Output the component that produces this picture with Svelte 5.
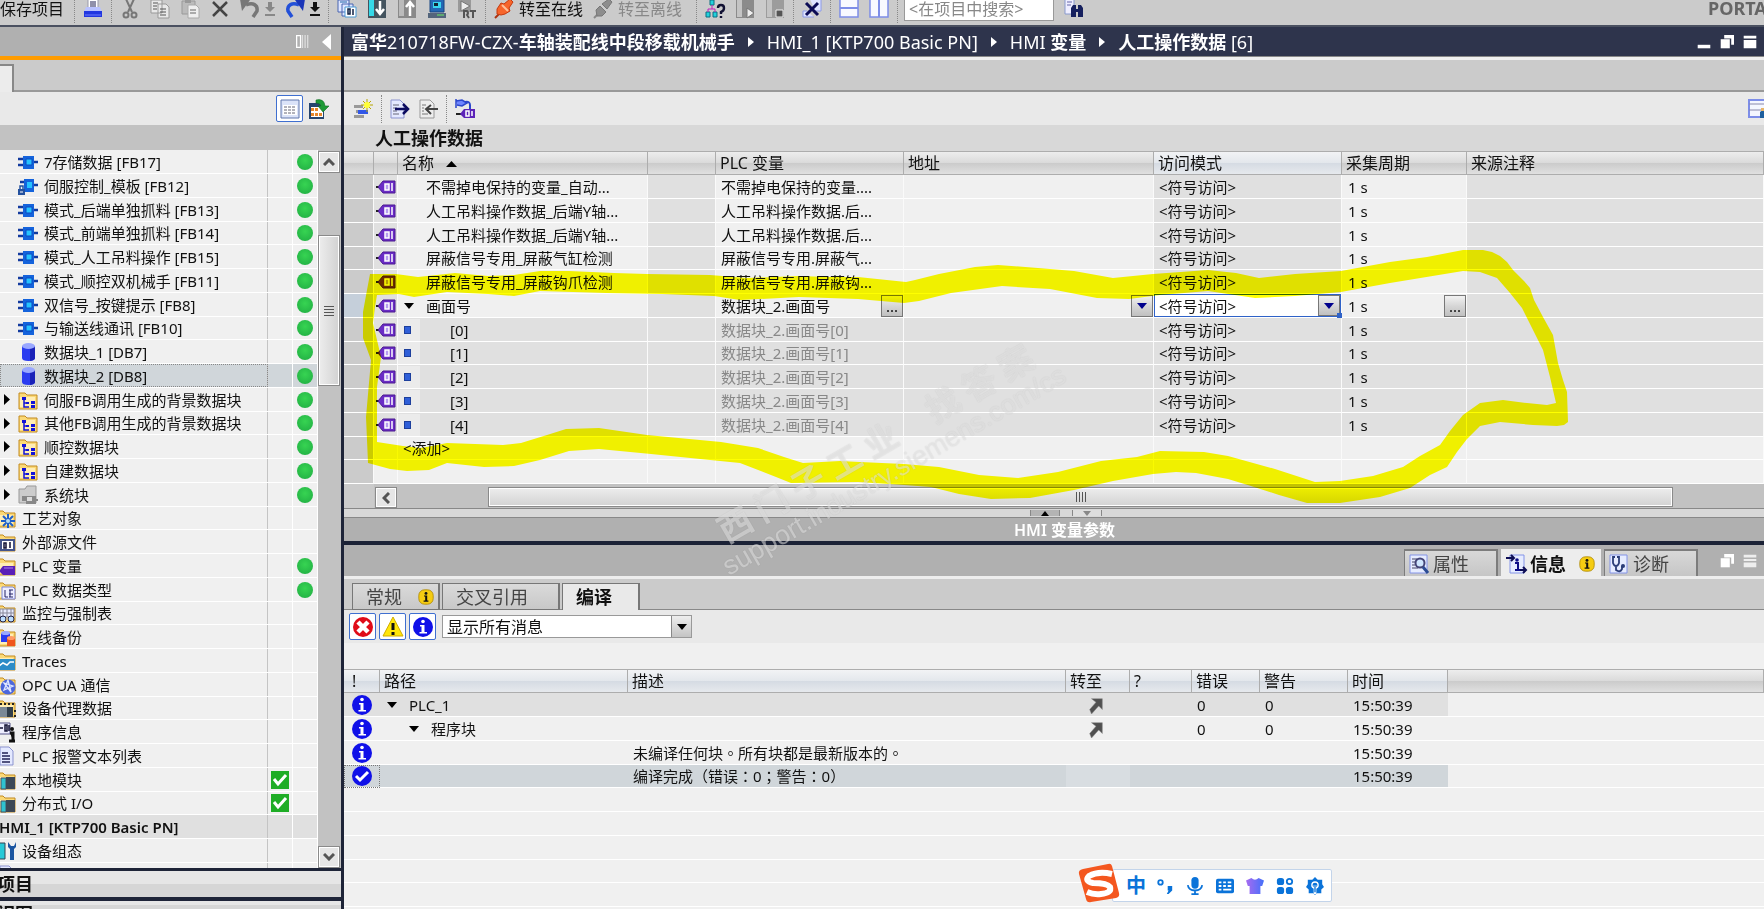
<script>
  // inner markup of the 20x20 icons
  const page = '<path d="M4 1h9l4 4v14H4z" fill="#e4e9ff" stroke="#8b93cf"/>';
  const folder = '<path d="M1 3h6l2 2h10v14H1z" fill="#fbd977" stroke="#c28a1e"/><path d="M2 7h15v10H2z" fill="#ffedb5"/>';
  const icons = {
    print: '<path d="M5 0h10v9H5z" fill="#fff" stroke="#99a"/><path d="M7 3h6M7 5h6M7 7h6" stroke="#225"/><path d="M3 8h14l2 5H1z" fill="#b9c2ff"/><path d="M1 12h18v6H1z" fill="#2237e0"/><path d="M2 16h16" stroke="#6d7cff"/>',
    cut: '<path d="M6 0l6 13M14 0L8 13" stroke="#777" stroke-width="2" fill="none"/><circle cx="6" cy="16" r="2.5" fill="none" stroke="#777" stroke-width="2"/><circle cx="14" cy="16" r="2.5" fill="none" stroke="#777" stroke-width="2"/>',
    copy: '<path d="M1 1h11v13H1zM8 5h8l3 3v11H8z" fill="#e8e8e8" stroke="#999"/><path d="M3 4h5M3 7h4M3 10h4M10 10h6M10 13h6M10 16h6" stroke="#555"/>',
    paste: '<path d="M2 2h13v13H2z" fill="#bbb" stroke="#999"/><path d="M5 0h6v4H5z" fill="#999"/><path d="M8 6h8l3 3v10H8z" fill="#eee" stroke="#aaa"/><path d="M10 11h6M10 14h6" stroke="#666"/>',
    remove: '<path d="M3 3l14 14M17 3L3 17" stroke="#444" stroke-width="2.5"/>',
    undo: '<path d="M6 6c7-3 12 0 11 6l-4 6" fill="none" stroke="#777" stroke-width="3.5"/><path d="M0 0l10 1-8 11z" fill="#777"/>',
    redo: '<path d="M14 6C7 3 2 6 3 12l4 6" fill="none" stroke="#2350d8" stroke-width="3.5"/><path d="M20 0L10 1l8 11z" fill="#1a35b8"/>',
    compile: '<path d="M1 1h11v12H1zM5 5h11v12H5z" fill="#dfe6ff" stroke="#4865b0"/><path d="M3 3h7" stroke="#26a"/><path d="M8 8h11v10H8z" fill="#fff" stroke="#4a9ad4"/><path d="M11 10h2v5h-2zM16 10v6" stroke="#124" fill="none" stroke-width="1.5"/>',
    download: '<path d="M1 0h18v19H1z" fill="#44545f"/><path d="M2 1h5v16H2z" fill="#35d9e8"/><path d="M13 2v12M9 10l4 5 4-5" stroke="#fff" stroke-width="2.5" fill="none"/>',
    upload: '<path d="M1 0h18v19H1z" fill="#8a8a8a"/><path d="M2 1h5v16H2z" fill="#bbb"/><path d="M13 17V4M9 8l4-5 4 5" stroke="#fff" stroke-width="2.5" fill="none"/>',
    simulate: '<path d="M3 0h14v13H3z" fill="#2467b4" stroke="#174480"/><path d="M6 3h8v6H6z" fill="#39d5ee"/><path d="M7 4h4v3H7z" fill="#123"/><path d="M1 14h18v5H1z" fill="#54657c"/><path d="M10 16h7" stroke="#6e6"/>',
    runtime: '<path d="M1 0h13v13H1z" fill="#999"/><path d="M4 2l9 5-9 5z" fill="#eee" stroke="#777"/><path d="M7 19v-7h3q2 2 0 4l2 3M13 12h6M16 12v7" stroke="#555" stroke-width="2" fill="none"/>',
    online: '<path d="M1 19l5-5" stroke="#a31" stroke-width="2"/><path d="M3 10l4-6 3 1 6-5 3 3-4 6 1 3-5 3-4 1-4-1z" fill="#f7652b" stroke="#c43a10"/><path d="M8 6l6 6" stroke="#ffc09a" stroke-width="2"/>',
    offline: '<path d="M1 19l5-5" stroke="#888" stroke-width="2"/><path d="M3 11l4-4 6 6-4 4-5 0zM9 5l7-5 3 3-5 7z" fill="#8d8d8d" stroke="#777"/>',
    diagnose: '<path d="M5 1h4v5H5zM1 13h4v5H1zM8 13h4v5H8z" fill="#21d2dd" stroke="#0c6c80"/><path d="M7 6v4M3 13v-3h7v3" stroke="#b2b" fill="none"/><path d="M13 9q0-3 3-3t3 3-3 4v2M16 17v2" stroke="#113" stroke-width="2.4" fill="none"/>',
    startCpu: '<path d="M1 0h18v19H1z" fill="#8b8b8b"/><path d="M2 1h5v17H2z" fill="#c4c4c4"/><path d="M12 9l7 5-7 5z" fill="#eee" stroke="#777"/>',
    stopCpu: '<path d="M1 0h18v19H1z" fill="#9c9c9c"/><path d="M2 1h5v17H2z" fill="#c4c4c4"/><path d="M11 11h7v7h-7z" fill="#555" stroke="#eee"/>',
    crossRef: '<path d="M8 0h11v12h-6M12 18H1v-6h4" fill="#dfe4ff" stroke="#8d9be8"/><path d="M4 4l12 12M16 4L4 16" stroke="#0b0b55" stroke-width="3"/>',
    splitH: '<path d="M1 0h18v18H1z" fill="#f8f9ff" stroke="#7d8de8" stroke-width="1.5"/><path d="M1 9h18" stroke="#7d8de8" stroke-width="2"/>',
    splitV: '<path d="M1 0h18v18H1z" fill="#f8f9ff" stroke="#7d8de8" stroke-width="1.5"/><path d="M10 0v18" stroke="#7d8de8" stroke-width="2"/>',
    find: '<path d="M1 0h9v15H1z" fill="#eef" stroke="#89c"/><path d="M3 3h5M3 6h4" stroke="#66a"/><path d="M7 18V9l2-3h3v4h2V6h3l2 3v9h-5v-5h-2v5z" fill="#16205e"/>',
    list: '<path d="M1 1h18v18H1z" fill="#dbe3f8" stroke="#6076ac"/><path d="M3 6h14v10H3z" fill="#fff"/><path d="M4 8h3M8 8h3M12 8h3M4 11h3M8 11h3M12 11h3M4 14h3M8 14h3M12 14h3" stroke="#667"/>',
    exportList: '<path d="M0 4h15v16H0z" fill="#26456e"/><path d="M2 8h12v10H2z" fill="#fff"/><path d="M2 9h3v3H2zM6 9h3v3H6zM2 14h3v3H2zM6 14h3v3H6zM10 14h3v3h-3z" fill="#e7862a"/><path d="M7 1q8-2 9 6h4l-6 6-5-6h3q-1-3-5-3z" fill="#1d9a35" stroke="#0e6c20" stroke-width=".6"/>',
    addTag: '<path d="M1 6h9v3H1zM3 11h8v3H3zM1 16h10v3H1z" fill="#999"/><path d="M5 11h10v4H5z" fill="#3156e8"/><path d="M14 0v13M8 6h12M10 2l8 8M18 2l-8 8" stroke="#b7a600"/><circle cx="14" cy="6" r="3" fill="#ff3"/>',
    exportDoc: '<path d="M1 1h9l4 4v14H1z" fill="#e4e9ff" stroke="#8b93cf"/><path d="M3 6h6M3 9h4M3 12h4M3 15h6" stroke="#667"/><path d="M5 10h13M13 5l5 5-5 5" stroke="#0b0b60" stroke-width="2.5" fill="none"/>',
    importDoc: '<path d="M2 1h10l4 4v14H2z" fill="#eee" stroke="#999"/><path d="M4 6h4M4 9h2M4 12h2M4 15h6" stroke="#777"/><path d="M20 10H9M13 6l-5 4 5 5" stroke="#444" stroke-width="2" fill="none"/>',
    linkTag: '<path d="M1 0v9M1 2l6-1 5 3-5 3-5-1" stroke="#2b46cc" stroke-width="1.5" fill="#6f86ff"/><path d="M10 3q5-1 5 3v4" stroke="#2b46cc" stroke-width="2" fill="none"/><path d="M1 15h5" stroke="#222" stroke-width="2"/><path d="M5 15l4-5h11v9H9z" fill="#5c23b8"/><path d="M11 12h3v5h-3zM17 12v5" stroke="#fff" fill="none" stroke-width="1.5"/>',
    viewSet: '<path d="M1 1h24v17H1z" fill="#f4f6ff" stroke="#7d8de8" stroke-width="2"/><path d="M1 5h24M1 11h24" stroke="#88a"/><path d="M12 19v-6l4-3h6v9z" fill="#1e5f9e"/><path d="M13 9h7v3h-7z" fill="#e7b469"/>',
    block: '<path d="M0 7h6M0 13h6M14 10h6" stroke="#123a9e" stroke-width="2.5"/><path d="M5 4h11v13H5z" fill="#1463dc"/><path d="M8 7h6v6H8z" fill="#27c2ff" stroke="#0a4ac0"/>',
    blockLock: '<path d="M2 6h6M14 9h6" stroke="#123a9e" stroke-width="2.5"/><path d="M6 3h10v13H6z" fill="#1463dc"/><path d="M9 6h5v6H9z" fill="#27c2ff"/><path d="M0 13h7v6H0z" fill="#24519e"/><path d="M2 13v-3h3v3" stroke="#24519e" fill="none" stroke-width="1.5"/><path d="M2 16h3" stroke="#fff"/>',
    db: '<path d="M4 4v12q0 3 6.500 3t6.500-3V4z" fill="#2b3cf0"/><path d="M12 4h5v12q0 2-5 3z" fill="#1a22b8"/><ellipse cx="10.500" cy="4" rx="6.500" ry="3" fill="#9aa8ff"/>',
    folderTree: folder + '<path d="M4 7h4v3H4zM8 12h3v2H8zM13 11h4v3h-4zM13 15h4v3h-4z" fill="#1212d8"/><path d="M6 9v8h5M6 13h4" stroke="#1212d8" stroke-width="1.500" fill="none"/>',
    folderSys: '<path d="M1 4h6l2-3h9v17H1z" fill="#ccc" stroke="#999"/><path d="M4 11h14v3h2v2h-2v3H8v-3H4z" fill="#888"/><path d="M9 12h5v4H9z" fill="#ddd"/>',
    folderGear: folder + '<path d="M12 6v14M5 13h14M7 8l10 10M17 8L7 18" stroke="#2060c8" stroke-width="2"/><circle cx="12" cy="13" r="2" fill="#bde"/>',
    folderSrc: folder + '<path d="M5 8h13v10H5z" fill="#fff" stroke="#44548a" stroke-width="2"/><path d="M8 11h2v5H8zM14 10v6" stroke="#113" fill="none" stroke-width="1.500"/>',
    folderTag: folder + '<path d="M3 15l4-5h12v9H7z" fill="#5a20b8"/><path d="M8 12h9" stroke="#a780ee"/>',
    folderType: folder + '<path d="M6 7h11l2 2v10H6z" fill="#eef" stroke="#7a86d8"/><path d="M9 10v7h3M13 10h4M13 14h4M13 17h4M14 10v7" stroke="#226" fill="none"/>',
    folderWatch: folder + '<path d="M4 6h14v8H4z" fill="#e8ecff" stroke="#889"/><path d="M7 6v8M11 6v8M15 6v8M4 10h14" stroke="#889"/><circle cx="7" cy="16" r="3" fill="#bdf" stroke="#224"/><circle cx="15" cy="16" r="3" fill="#bdf" stroke="#224"/>',
    folderBackup: folder + '<path d="M5 6h9v9H5z" fill="#2b3cf0"/><ellipse cx="9.500" cy="6" rx="4.500" ry="2" fill="#9aa8ff"/><path d="M11 11h8v8h-8z" fill="#f0561c"/><ellipse cx="15" cy="11" rx="4" ry="2" fill="#ff9a66"/>',
    folderTrace: folder + '<path d="M2 8h17v11H2z" fill="#2c8cc8"/><path d="M3 15l4-3 4 2 3-3h4" stroke="#fff" stroke-width="1.500" fill="none"/>',
    folderOpc: folder + '<circle cx="12" cy="12" r="7.500" fill="#4c67dc"/><path d="M12 5l-4 10 9-4-9-3 7 9z" stroke="#dfe6ff" fill="none" stroke-width="1.300"/>',
    folderProxy: folder + '<path d="M4 6h2M8 6h2M12 6h2M16 6h2" stroke="#222" stroke-width="2"/><path d="M4 9h7v10H4z" fill="#7a8896"/><path d="M11 9h6v10h-6z" fill="#303d4a"/><path d="M19 12v2M19 17v2" stroke="#222" stroke-width="2"/>',
    progInfo: '<path d="M1 1h13v11H1z" fill="#eef" stroke="#558"/><path d="M3 3v6M3 6h4M9 3h2v6H9zM13 3v6" stroke="#113" fill="none" stroke-width="1.500"/><path d="M14 11h3v7M13 19h6" stroke="#111" stroke-width="3"/><circle cx="16" cy="7" r="2" fill="#111"/>',
    textList: page + '<path d="M6 7h6M6 10h8M6 13h8M6 16h8" stroke="#225" stroke-width="1.500"/>',
    folderModule: folder + '<path d="M5 8h5v11H5z" fill="#2fc3d0" stroke="#456"/><path d="M10 7h9v12h-9z" fill="#3c4856"/>',
    deviceCfg: '<path d="M0 2h9v16H0z" fill="#27c9d8" stroke="#345"/><path d="M12 1v5l2 2v11h4V8l2-2V1l-2 4h-3z" fill="#1b55a0"/>',
    tag: '<path d="M0 10h3" stroke="#222" stroke-width="2"/><path d="M2 10l5-6h12v12H7z" fill="#6a2cc6" stroke="#4a1890"/><path d="M9 7h4v6H9z" fill="#b79cf0" stroke="#fff" stroke-width="1.500"/><path d="M16 6v8" stroke="#fff" stroke-width="1.500"/>',
    info: '<circle cx="10" cy="10" r="10" fill="#1010e8"/><circle cx="10" cy="4.500" r="1.800" fill="#fff"/><path d="M7 8h4.500v7H14v1.500H6.500V15h2V9.500H7z" fill="#fff"/>',
    done: '<circle cx="10" cy="10" r="10" fill="#1010e8"/><path d="M4 10l4 4 8-8" stroke="#fff" stroke-width="3" fill="none"/>',
    error: '<circle cx="10" cy="10" r="10" fill="#e00c18"/><path d="M5 5l10 10M15 5L5 15" stroke="#fff" stroke-width="4.500"/>',
    warning: '<path d="M10 0l10 19H0z" fill="#ffe60a" stroke="#d0ac00"/><path d="M10 6v7M10 15v3" stroke="#111" stroke-width="3"/>',
    notice: '<rect x="1" y="1" width="18" height="18" rx="7" fill="#f5cc12" stroke="#ac8700"/><circle cx="10" cy="5.500" r="1.800" fill="#111"/><path d="M7.500 8h4v6.500H13V16H7v-1.500h2v-5H7.500z" fill="#111"/>',
    goTo: '<path d="M5 3h12v12l-4-4-8 9-2-5 7-8z" fill="#505050" stroke="#888" stroke-width=".6"/>',
    props: '<path d="M1 1h17v18H1z" fill="#e6ecff" stroke="#8494e8"/><path d="M3 5h5M3 8h3M3 11h3M3 14h6" stroke="#446"/><circle cx="11" cy="9" r="4.500" fill="#cfe6ff" stroke="#447" stroke-width="2"/><path d="M14 13l5 6" stroke="#2c4c94" stroke-width="3"/>',
    infoDoc: '<path d="M4 1h14v18H4z" fill="#e6ecff" stroke="#8494e8"/><path d="M0 4h8M5 1l3 3-3 3M12 16h8M17 13l3 3-3 3" stroke="#0d0d55" stroke-width="2" fill="none"/><circle cx="11" cy="6" r="1.800" fill="#0d0d88"/><path d="M9 9h3v7M9 16h5" stroke="#0d0d88" stroke-width="2" fill="none"/>',
    diagDoc: '<path d="M1 1h17v18H1z" fill="#e6ecff" stroke="#8494e8"/><path d="M6 3H4v6q1 3 3 3t3-3V3H8M7 12v4q4 3 6-1v-3" stroke="#2b3d78" stroke-width="1.800" fill="none"/><circle cx="14" cy="12" r="2" fill="#2b3d78"/>',
    restore: '<path d="M6 0h14v14h-4V5H6z" fill="#fff"/><path d="M1 6h13v13H1z" fill="#fff"/>',
    maximize: '<path d="M1 1h18v4H1zM1 7h18v12H1z" fill="#fff"/>',
    minimize: '<path d="M1 14h18v5H1z" fill="#fff"/>',
    rowsWin: '<path d="M1 1h18v4H1zM1 7h18v3H1zM1 12h18v7H1z" fill="#eee"/>',
    columns: '<path d="M1 1h6v18H1z" fill="none" stroke="#fff" stroke-width="2"/><path d="M10 0v20M14 0v20M18 0v20" stroke="#ddd" stroke-width="2"/>',
    mic: '<rect x="6" y="0" width="8" height="13" rx="4" fill="#0a73d9"/><path d="M2 9q1 6 8 6t8-6M10 15v3M6 19h8" stroke="#0a73d9" stroke-width="2" fill="none"/>',
    punct: '<circle cx="5" cy="6" r="2.500" fill="none" stroke="#0a73d9" stroke-width="2"/><path d="M13 10h5v5l-4 4h-2l2-4h-1z" fill="#0a73d9"/>',
    keyboard: '<rect x="0" y="2" width="20" height="16" rx="2" fill="#0a73d9"/><path d="M3 6h3M8 6h3M13 6h4M3 10h3M8 10h3M13 10h4M3 14h3M8 14h9" stroke="#fff" stroke-width="2"/>',
    shirt: '<defs><linearGradient id="skin"><stop offset="0" stop-color="#a76bf0"/><stop offset="1" stop-color="#4470fa"/></linearGradient></defs><path d="M6 1q4 4 8 0l6 3-2 6h-2v9H4v-9H2L0 4z" fill="url(#skin)"/>',
    apps: '<rect x="1" y="1" width="8" height="8" rx="3" fill="#0a73d9"/><rect x="1" y="11" width="8" height="8" rx="3" fill="#0a73d9"/><rect x="11" y="11" width="8" height="8" rx="3" fill="#0a73d9"/><circle cx="15" cy="5" r="3" fill="none" stroke="#0a73d9" stroke-width="2"/>',
    settings: '<path d="M10 0l3 3 5 0 0 5 2 3-3 3v4l-5 0-2 2-2-2H3v-4l-3-3 2-3V3h5z" fill="#0a73d9"/><circle cx="10" cy="9" r="3.500" fill="none" stroke="#fff" stroke-width="1.500"/><path d="M10 9v10" stroke="#fff" stroke-width="3"/><path d="M10 9v8" stroke="#0a73d9" stroke-width="1.500"/>',
  };

  const tree = [
    { icon: "block", text: "7存储数据 [FB17]", level: 2, ok: true },
    { icon: "blockLock", text: "伺服控制_模板 [FB12]", level: 2, ok: true },
    { icon: "block", text: "模式_后端单独抓料 [FB13]", level: 2, ok: true },
    { icon: "block", text: "模式_前端单独抓料 [FB14]", level: 2, ok: true },
    { icon: "block", text: "模式_人工吊料操作 [FB15]", level: 2, ok: true },
    { icon: "block", text: "模式_顺控双机械手 [FB11]", level: 2, ok: true },
    { icon: "block", text: "双信号_按键提示 [FB8]", level: 2, ok: true },
    { icon: "block", text: "与输送线通讯 [FB10]", level: 2, ok: true },
    { icon: "db", text: "数据块_1 [DB7]", level: 2, ok: true },
    { icon: "db", text: "数据块_2 [DB8]", level: 2, ok: true, selected: true },
    { icon: "folderTree", text: "伺服FB调用生成的背景数据块", level: 2, ok: true, arrow: true },
    { icon: "folderTree", text: "其他FB调用生成的背景数据块", level: 2, ok: true, arrow: true },
    { icon: "folderTree", text: "顺控数据块", level: 2, ok: true, arrow: true },
    { icon: "folderTree", text: "自建数据块", level: 2, ok: true, arrow: true },
    { icon: "folderSys", text: "系统块", level: 2, ok: true, arrow: true },
    { icon: "folderGear", text: "工艺对象", level: 1 },
    { icon: "folderSrc", text: "外部源文件", level: 1 },
    { icon: "folderTag", text: "PLC 变量", level: 1, ok: true },
    { icon: "folderType", text: "PLC 数据类型", level: 1, ok: true },
    { icon: "folderWatch", text: "监控与强制表", level: 1 },
    { icon: "folderBackup", text: "在线备份", level: 1 },
    { icon: "folderTrace", text: "Traces", level: 1 },
    { icon: "folderOpc", text: "OPC UA 通信", level: 1 },
    { icon: "folderProxy", text: "设备代理数据", level: 1 },
    { icon: "progInfo", text: "程序信息", level: 1 },
    { icon: "textList", text: "PLC 报警文本列表", level: 1 },
    { icon: "folderModule", text: "本地模块", level: 1, check: true },
    { icon: "folderModule", text: "分布式 I/O", level: 1, check: true },
    { text: "HMI_1 [KTP700 Basic PN]", level: 0 },
    { icon: "deviceCfg", text: "设备组态", level: 1 },
    { icon: "textList", text: "", level: 1 },
  ];

  const tags = [
    { name: "不需掉电保持的变量_自动...", plc: "不需掉电保持的变量...." },
    { name: "人工吊料操作数据_后端Y轴...", plc: "人工吊料操作数据.后..." },
    { name: "人工吊料操作数据_后端Y轴...", plc: "人工吊料操作数据.后..." },
    { name: "屏蔽信号专用_屏蔽气缸检测", plc: "屏蔽信号专用.屏蔽气..." },
    { name: "屏蔽信号专用_屏蔽钩爪检测", plc: "屏蔽信号专用.屏蔽钩..." },
    { name: "画面号", plc: "数据块_2.画面号", active: true },
    { name: "[0]", plc: "数据块_2.画面号[0]", child: true },
    { name: "[1]", plc: "数据块_2.画面号[1]", child: true },
    { name: "[2]", plc: "数据块_2.画面号[2]", child: true },
    { name: "[3]", plc: "数据块_2.画面号[3]", child: true },
    { name: "[4]", plc: "数据块_2.画面号[4]", child: true },
  ];

  const messages = [
    { icon: "info", path: "PLC_1", level: 1, count: "0", tone: "shade" },
    { icon: "info", path: "程序块", level: 2, count: "0", tone: "" },
    { icon: "info", text: "未编译任何块。所有块都是最新版本的。", tone: "" },
    { icon: "done", text: "编译完成（错误：0；警告：0）", tone: "picked" },
  ];

  // latin runs are set lighter than the chinese ones
  const crumbs = [
    ["富华", "210718FW-CZX-", "车轴装配线中段移载机械手"],
    ["", "HMI_1 [KTP700 Basic PN]", ""],
    ["", "HMI ", "变量"],
    ["人工操作数据", " [6]", ""],
  ];

  let access = $state("<符号访问>");
  let filter = $state("显示所有消息");
</script>

{#snippet ico(name)}
  <svg class="ico" viewBox="0 0 20 20" aria-hidden="true">{@html icons[name]}</svg>
{/snippet}

{#snippet tool(name)}
  <button class="tool" aria-label={name}>{@render ico(name)}</button>
{/snippet}

{#snippet drop(cls)}
  <button class="tool {cls}" aria-label="drop">
    <svg viewBox="0 0 10 14" width="10" height="14"><path d="M3 0h4v5h3l-5 5-5-5h3zM0 12h10v2H0z" fill="currentColor" /></svg>
  </button>
{/snippet}

<div class="app">
  <header class="topbar">
    <div class="group first"><button class="tool">保存项目</button></div>
    <div class="group">{@render tool("print")}</div>
    <div class="group">
      {@render tool("cut")}
      {@render tool("copy")}
      {@render tool("paste")}
      {@render tool("remove")}
      <div class="split">{@render tool("undo")}{@render drop("dim")}</div>
      <div class="split">{@render tool("redo")}{@render drop("")}</div>
    </div>
    <div class="group">
      {@render tool("compile")}
      {@render tool("download")}
      {@render tool("upload")}
      {@render tool("simulate")}
      {@render tool("runtime")}
    </div>
    <div class="group online">
      <button class="tool">{@render ico("online")}转至在线</button>
      <button class="tool" disabled>{@render ico("offline")}转至离线</button>
    </div>
    <div class="group">
      {@render tool("diagnose")}
      {@render tool("startCpu")}
      {@render tool("stopCpu")}
    </div>
    <div class="group">{@render tool("crossRef")}</div>
    <div class="group">
      {@render tool("splitH")}
      {@render tool("splitV")}
    </div>
    <div class="group last">
      <input class="search" type="text" placeholder="<在项目中搜索>" aria-label="在项目中搜索" />
      {@render tool("find")}
    </div>
    <div class="brand">PORTAL</div>
  </header>

  <div class="main">
    <aside class="side">
      <div class="side-head">
        <span class="mini">{@render ico("columns")}</span>
        <svg width="9" height="16" viewBox="0 0 9 16"><path d="M9 0v16L0 8z" fill="#fff" /></svg>
      </div>
      <div class="side-tabs"><div class="stub"></div></div>
      <div class="side-tools">
        <button class="framed" aria-label="list">{@render ico("list")}</button>
        {@render tool("exportList")}
      </div>
      <div class="side-gap"></div>
      <div class="tree-wrap">
        <ul class="tree">
          {#each tree as node}
            <li class="node level{node.level}" class:selected={node.selected}>
              <div class="label">
                {#if node.level === 2}
                  <span class="exp">
                    {#if node.arrow}
                      <svg width="6" height="11" viewBox="0 0 6 11"><path d="M0 0l6 5.500L0 11z" /></svg>
                    {/if}
                  </span>
                {/if}
                {#if node.icon}{@render ico(node.icon)}{/if}
                <span>{node.text}</span>
              </div>
              <div class="state">
                {#if node.check}
                  <svg width="18" height="18" viewBox="0 0 18 18"><path d="M0 0h18v18H0z" fill="#1fad26" /><path d="M3 8l4 5 8-9" stroke="#fff" stroke-width="3" fill="none" /></svg>
                {/if}
              </div>
              <div class="state">
                {#if node.ok}<i class="dot"></i>{/if}
              </div>
            </li>
          {/each}
        </ul>
        <div class="vbar">
          <button class="arrow-btn" aria-label="up"><svg width="12" height="8" viewBox="0 0 12 8"><path d="M1 7l5-5 5 5" /></svg></button>
          <div class="vthumb"><i></i><i></i><i></i><i></i></div>
          <button class="arrow-btn down" aria-label="down"><svg width="12" height="8" viewBox="0 0 12 8"><path d="M1 1l5 5 5-5" /></svg></button>
        </div>
      </div>
      <div class="panel"><span>项目</span></div>
      <div class="panel"><span>视图</span></div>
    </aside>

    <section class="work">
      <div class="crumbs">
        {#each crumbs as [head, latin, tail], i}
          {#if i > 0}
            <svg width="6" height="10" viewBox="0 0 6 10"><path d="M0 0l6 5-6 5z" fill="#fff" /></svg>
          {/if}
          <span class="crumb">{head}<span class="latin">{latin}</span>{tail}</span>
        {/each}
        <div class="win">
          {@render ico("minimize")}
          {@render ico("restore")}
          {@render ico("maximize")}
        </div>
      </div>
      <div class="strip"></div>
      <div class="work-tools">
        {@render tool("addTag")}
        <i class="sep"></i>
        {@render tool("exportDoc")}
        {@render tool("importDoc")}
        <i class="sep"></i>
        {@render tool("linkTag")}
        <span class="edge">{@render tool("viewSet")}</span>
      </div>
      <h1>人工操作数据</h1>

      <table class="tags">
        <colgroup>
          <col class="w-row" /><col class="w-icon" /><col class="w-name" /><col class="w-type" />
          <col class="w-plc" /><col class="w-name" /><col class="w-mode" /><col class="w-cycle" /><col />
        </colgroup>
        <thead>
          <tr>
            <th></th>
            <th></th>
            <th>名称 <svg class="sort" width="11" height="6" viewBox="0 0 11 6"><path d="M0 6l5.500-6L11 6z" /></svg></th>
            <th></th>
            <th>PLC 变量</th>
            <th>地址</th>
            <th class="blue">访问模式</th>
            <th>采集周期</th>
            <th>来源注释</th>
          </tr>
        </thead>
        <tbody>
          {#each tags as tag}
            <tr class:child={tag.child} class:active={tag.active}>
              <td class="rowhead"></td>
              <td class="dark">{@render ico("tag")}</td>
              <td>
                <div class="cell name">
                  <span class="mark">
                    {#if tag.active}
                      <svg width="10" height="6" viewBox="0 0 10 6"><path d="M0 0h10L5 6z" /></svg>
                    {:else if tag.child}
                      <i class="square"></i>
                    {/if}
                  </span>
                  <span>{tag.name}</span>
                </div>
              </td>
              <td class="dark"></td>
              <td>
                <div class="cell plc">
                  <span>{tag.plc}</span>
                  {#if tag.active}<button class="mini-btn dots">...</button>{/if}
                </div>
              </td>
              <td>
                {#if tag.active}
                  <div class="cell end"><button class="mini-btn" aria-label="open"><svg width="10" height="6" viewBox="0 0 10 6"><path d="M0 0h10L5 6z" fill="#00008c" /></svg></button></div>
                {/if}
              </td>
              <td class="dark">
                {#if tag.active}
                  <div class="picker">
                    <select bind:value={access} aria-label="访问模式">
                      <option value="<符号访问>">&lt;符号访问&gt;</option>
                    </select>
                    <span class="mini-btn"><svg width="10" height="6" viewBox="0 0 10 6"><path d="M0 0h10L5 6z" fill="#00008c" /></svg></span>
                  </div>
                {:else}
                  <div class="cell">&lt;符号访问&gt;</div>
                {/if}
              </td>
              <td>
                <div class="cell cycle">
                  <span>1 s</span>
                  {#if tag.active}<button class="mini-btn dots">...</button>{/if}
                </div>
              </td>
              <td class="dark"></td>
            </tr>
          {/each}
          <tr>
            <td class="rowhead"></td>
            <td></td>
            <td><div class="cell">&lt;添加&gt;</div></td>
            <td></td><td></td><td></td><td></td><td></td><td></td>
          </tr>
          <tr>
            <td class="rowhead"></td>
            <td></td><td></td><td></td><td></td><td></td><td></td><td></td><td></td>
          </tr>
        </tbody>
      </table>

      <div class="hbar">
        <button class="arrow-btn" aria-label="left"><svg width="8" height="12" viewBox="0 0 8 12"><path d="M7 1L2 6l5 5" /></svg></button>
        <div class="hthumb"><i></i><i></i><i></i><i></i></div>
      </div>
      <div class="splitter">
        <button aria-label="expand"><svg width="8" height="5" viewBox="0 0 8 5"><path d="M0 5l4-5 4 5z" /></svg></button>
        <button class="light" aria-label="collapse"><svg width="8" height="5" viewBox="0 0 8 5"><path d="M0 0h8L4 5z" fill="#888" /></svg></button>
      </div>
      <div class="params">HMI 变量参数</div>

      <div class="inspector">
        <button class="itab">{@render ico("props")}属性</button>
        <button class="itab on">{@render ico("infoDoc")}信息<span class="badge">{@render ico("notice")}</span></button>
        <button class="itab">{@render ico("diagDoc")}诊断</button>
        <div class="win">
          {@render ico("restore")}
          {@render ico("rowsWin")}
        </div>
      </div>

      <div class="subtabs">
        <button class="general">常规 <span class="badge">{@render ico("notice")}</span></button>
        <button class="cross">交叉引用</button>
        <button class="on">编译</button>
      </div>
      <div class="filters">
        <button class="framed" aria-label="错误">{@render ico("error")}</button>
        <button class="framed" aria-label="警告">{@render ico("warning")}</button>
        <button class="framed" aria-label="信息">{@render ico("info")}</button>
        <div class="combo">
          <select bind:value={filter} aria-label="显示所有消息">
            <option>显示所有消息</option>
          </select>
          <span><svg width="10" height="6" viewBox="0 0 10 6"><path d="M0 0h10L5 6z" /></svg></span>
        </div>
      </div>

      <table class="msgs">
        <colgroup>
          <col class="m-icon" /><col class="m-path" /><col class="m-text" /><col class="m-go" />
          <col class="m-help" /><col class="m-err" /><col class="m-warn" /><col class="m-time" /><col />
        </colgroup>
        <thead>
          <tr>
            <th class="bang">!</th>
            <th>路径</th>
            <th>描述</th>
            <th>转至</th>
            <th>?</th>
            <th>错误</th>
            <th>警告</th>
            <th>时间</th>
            <th class="rest"></th>
          </tr>
        </thead>
        <tbody>
          {#each messages as msg}
            <tr class={msg.tone}>
              <td class="kind">{@render ico(msg.icon)}</td>
              <td>
                {#if msg.path}
                  <div class="path p{msg.level}">
                    <svg width="10" height="6" viewBox="0 0 10 6"><path d="M0 0h10L5 6z" /></svg>{msg.path}
                  </div>
                {/if}
              </td>
              <td><div class="cell note">{msg.text ?? ""}</div></td>
              <td class="go">{#if msg.count}{@render ico("goTo")}{/if}</td>
              <td></td>
              <td><div class="cell">{msg.count ?? ""}</div></td>
              <td><div class="cell">{msg.count ?? ""}</div></td>
              <td><div class="cell">15:50:39</div></td>
              <td class="rest"></td>
            </tr>
          {/each}
          {#each Array(6) as _}
            <tr><td colspan="9"></td></tr>
          {/each}
        </tbody>
      </table>
    </section>
  </div>

  <!-- freehand marker loop -->
  <svg class="marker" width="1600" height="520" viewBox="0 0 1600 520" aria-hidden="true">
    <path
      fill="#ffff00"
      fill-rule="evenodd"
      d="M370 274L396 274L418 277L455 273L488 276L514 275L540 271L569 271L614 273L647 274L710 275L747 278L799 276L828 277L858 277L906 282L915 280L939 274L975 267L998 265L1038 268L1074 271L1113 278L1153 274L1208 270L1236 273L1259 278L1295 274L1341 271L1390 262L1427 257L1463 250L1483 250L1492 252L1500 256L1507 262L1513 270L1524 281L1530 288L1534 300L1543 317L1553 335L1558 363L1563 380L1567 392L1568 422L1564 425L1557 426L1533 425L1500 422L1480 426L1467 439L1457 452L1447 467L1430 475L1410 488L1380 497L1340 503L1307 503L1279 495L1251 486L1228 479L1196 473L1176 472L1153 474L1113 481L1074 490L1030 498L991 499L959 494L931 487L904 485L858 482L791 483L776 477L740 463L710 460L651 454L599 449L569 451L540 460L514 466L484 467L447 463L429 470L407 471L390 469L368 463L366 417L371 360L363 338L363 312L367 290Z
      M377 295L375 307L373 323L381 357L377 387L377 442L403 446L421 448L447 443L503 445L521 443L547 435L566 429L599 428L647 435L721 442L758 448L784 457L803 463L840 461L860 462L904 464L939 467L979 475L1018 478L1058 472L1101 461L1137 457L1160 451L1204 452L1228 456L1275 469L1315 482L1340 481L1373 476L1403 467L1420 456L1440 445L1450 431L1463 415L1480 403L1503 400L1527 403L1547 405L1556 403L1550 377L1543 350L1522 308L1510 293L1497 278L1480 272L1463 271L1390 283L1341 292L1295 296L1255 298L1208 291L1160 295L1129 299L1097 298L1050 289L1002 286L951 293L919 301L904 303L858 299L799 297L740 300L714 296L662 294L606 293L540 291L514 296L488 294L447 292L414 297L399 294Z"
    />
  </svg>

  <div class="watermark">
    <div class="wm-title"><span>西</span><span>门</span><span>子</span><span>工</span><span>业</span><span class="wm-gap">找</span><span>答</span><span>案</span></div>
    <div class="wm-url">support.industry.siemens.com/cs</div>
  </div>

  <div class="ime">
    <svg class="sogou" width="42" height="40" viewBox="0 0 42 40">
      <path d="M5 6L30 1q3-1 4 2l7 27q1 4-3 5L13 39q-4 1-5-3L1 11q-1-4 4-5z" fill="#f4571f" />
      <path d="M34 11Q20 8 11 13q-5 5 4 7 14 0 17 4 2 6-9 7-7 1-14-2" fill="none" stroke="#fff" stroke-width="6" />
    </svg>
    <button class="zh">中</button>
    {@render tool("punct")}
    {@render tool("mic")}
    {@render tool("keyboard")}
    {@render tool("shirt")}
    {@render tool("apps")}
    {@render tool("settings")}
  </div>
</div>

<style>
  :global(body) {
    margin: 0;
    background: #c8c8c8;
  }

  .app {
    position: relative;
    display: flex;
    flex-direction: column;
    height: 100vh;
    overflow: hidden;
    font-family: "Noto Sans", "Noto Sans CJK SC", sans-serif;
    font-size: 15px;
    line-height: 20px;
    color: #111;
    white-space: nowrap;
  }

  .app * {
    box-sizing: border-box;
  }

  button,
  select,
  input {
    font: inherit;
    color: inherit;
    margin: 0;
    padding: 0;
    border: none;
    background: none;
    border-radius: 0;
  }

  svg {
    display: block;
    flex: none;
  }

  .ico {
    width: 20px;
    height: 20px;
    overflow: visible;
  }

  .tool {
    display: flex;
    align-items: center;
    gap: 5px;
    flex: none;
  }

  /* top toolbar */
  .topbar {
    display: flex;
    flex: none;
    height: 27px;
    background: #cbcbcb;
    border-bottom: 2px solid #4a5060;
    font-size: 16px;
    line-height: 18px;
  }

  .group {
    display: flex;
    align-items: center;
    gap: 10px;
    height: 23px;
    padding: 0 8px 5px;
    border-right: 1px dotted #888;
  }

  .group.first {
    padding-right: 10px;
    padding-left: 0;
  }

  .group.online {
    padding-right: 14px;
  }

  .group.last {
    border: none;
    padding-left: 6px;
  }

  .split {
    display: flex;
    align-items: center;
    gap: 5px;
  }

  .dim,
  .tool:disabled {
    color: #888;
  }

  .search {
    width: 150px;
    height: 24px;
    padding: 0 4px;
    background: #fff;
    border: 1px solid #999;
  }

  .search::placeholder {
    color: #888;
  }

  .brand {
    width: 56px;
    margin-left: auto;
    font-size: 18px;
    font-weight: bold;
    line-height: 16px;
    color: #666;
  }

  .main {
    display: flex;
    flex: 1;
    min-height: 0;
  }

  /* project tree */
  .side {
    display: flex;
    flex-direction: column;
    flex: none;
    width: 344px;
    border-right: 3px solid #1e2438;
    background: #c2c2c2;
  }

  .side-head {
    display: flex;
    align-items: center;
    justify-content: flex-end;
    gap: 13px;
    height: 33px;
    padding-right: 10px;
    background: #b0b0b0;
    border-bottom: 4px solid #ff9c00;
  }

  .mini .ico {
    width: 13px;
    height: 13px;
  }

  .side-tabs {
    height: 32px;
    padding-top: 4px;
    background: #cbcbcb;
    border-bottom: 2px solid #999;
  }

  .stub {
    width: 14px;
    height: 28px;
    background: #ececec;
    border: solid #888;
    border-width: 2px 2px 0 0;
  }

  .side-tools {
    display: flex;
    align-items: center;
    justify-content: flex-end;
    gap: 6px;
    height: 33px;
    padding-right: 12px;
    background: #e9e9e9;
  }

  .framed {
    display: flex;
    align-items: center;
    justify-content: center;
    width: 27px;
    height: 27px;
    background: #fff;
    border: 1px solid #3f6fd0;
    border-radius: 2px;
  }

  .side-gap {
    height: 25px;
  }

  .tree-wrap {
    display: flex;
    flex: 1;
    min-height: 0;
    border-bottom: 3px solid #1e2438;
  }

  .tree {
    flex: 1;
    margin: 0;
    padding: 0;
    overflow: hidden;
    list-style: none;
    background: #f0f0f0;
  }

  .node {
    display: flex;
    height: 24px;
    border-bottom: 1px solid #fff;
  }

  .node:nth-child(4n) {
    height: 23px;
  }

  .label {
    display: flex;
    align-items: center;
    flex: 1;
    gap: 6px;
    border-right: 1px solid #c4c4c4;
  }

  .level1 .label {
    margin-left: -4px;
  }

  .level0 {
    background: #e0e0e0;
    font-weight: 600;
  }

  .level0 .label {
    margin-left: -1px;
  }

  .selected .label,
  .selected .state {
    background: #d0d6da;
  }

  .selected .label {
    outline: 1px dotted #888;
    outline-offset: -1px;
  }

  .exp {
    width: 9px;
    padding-left: 4px;
    margin-right: 3px;
  }

  .state {
    display: flex;
    align-items: center;
    justify-content: center;
    width: 25px;
    border-right: 1px solid #fff;
  }

  .dot {
    width: 16px;
    height: 16px;
    border-radius: 50%;
    background: radial-gradient(circle at 50% 40%, #37d452, #1fab42);
  }

  .vbar {
    display: flex;
    flex-direction: column;
    width: 23px;
    padding: 1px 1px 0 0;
    background: #c2c2c2;
  }

  .arrow-btn {
    display: flex;
    align-items: center;
    justify-content: center;
    flex: none;
    width: 22px;
    height: 22px;
    background: #e6e6e6;
    border: 1px solid #8a8a8a;
    box-shadow: inset 0 0 0 1px #fff;
  }

  .arrow-btn path {
    fill: none;
    stroke: #555;
    stroke-width: 3;
  }

  .down {
    margin-top: auto;
  }

  .vthumb {
    display: flex;
    flex-direction: column;
    align-items: center;
    justify-content: center;
    gap: 2px;
    height: 151px;
    margin-top: 62px;
    background: linear-gradient(90deg, #ededed, #d2d2d2);
    border: 1px solid #8a8a8a;
    box-shadow: inset 0 0 0 1px #fff;
  }

  .vthumb i {
    width: 10px;
    height: 1px;
    background: #555;
  }

  .panel {
    flex: none;
    height: 30px;
    background: linear-gradient(#e6e6e6 50%, #d6d6d6 50%);
    border-bottom: 4px solid #1e2438;
    font-size: 18px;
    font-weight: bold;
    line-height: 26px;
  }

  .panel:last-child {
    height: 8px;
    border: none;
    overflow: hidden;
  }

  .panel span {
    margin-left: -3px;
  }

  /* editor */
  .work {
    display: flex;
    flex-direction: column;
    flex: 1;
    min-width: 0;
    background: #f0f0f0;
  }

  .crumbs {
    display: flex;
    align-items: center;
    flex: none;
    gap: 13px;
    height: 30px;
    padding: 0 7px;
    background: #2e344c;
    border-bottom: 1px solid #888;
    color: #fff;
    font-size: 18px;
    font-weight: bold;
  }

  .crumb {
    white-space: pre;
  }

  .latin {
    font-weight: 400;
  }

  .win {
    display: flex;
    gap: 9px;
    margin-left: auto;
  }

  .win .ico {
    width: 14px;
    height: 14px;
  }

  .strip {
    flex: none;
    height: 35px;
    background: #cbcbcb;
    border-top: 3px solid #f0f0f0;
    border-bottom: 2px solid #999;
  }

  .work-tools {
    display: flex;
    align-items: center;
    flex: none;
    gap: 8px;
    height: 33px;
    padding-left: 9px;
    background: #e9e9e9;
    overflow: hidden;
  }

  .sep {
    height: 28px;
    border-left: 1px dotted #888;
  }

  .edge {
    width: 16px;
    margin-left: auto;
  }

  h1 {
    flex: none;
    margin: 0;
    padding-left: 31px;
    background: #d8d8d8;
    font-size: 18px;
    line-height: 26px;
  }

  table {
    width: 100%;
    flex: none;
    border-collapse: separate;
    border-spacing: 0;
    table-layout: fixed;
  }

  th {
    height: 24px;
    padding: 0 0 0 4px;
    background: linear-gradient(#ededed, #dadada 50%, #cbcbcb 51%, #e0e0e0);
    border: solid #adadad;
    border-width: 1px 1px 1px 0;
    font-size: 16px;
    font-weight: normal;
    line-height: 20px;
    text-align: left;
  }

  .blue,
  .msgs th:not(.rest) {
    background: linear-gradient(#f2f3f5, #e3e7ec 50%, #d5dbe3 51%, #e6e9ed);
  }

  td {
    height: 24px;
    padding: 0;
    background: #f0f0f0;
    border-bottom: 1px solid #fff;
    line-height: 20px;
  }

  tr:nth-child(4n) td {
    height: 23px;
  }

  .tags td {
    border-right: 1px solid #fafafa;
  }

  .w-row {
    width: 30px;
  }
  .w-icon {
    width: 24px;
  }
  .w-name {
    width: 250px;
  }
  .w-type {
    width: 68px;
  }
  .w-plc,
  .w-mode {
    width: 188px;
  }
  .w-cycle {
    width: 125px;
  }

  .sort {
    display: inline-block;
    margin: 0 0 2px 8px;
  }

  .tags .dark,
  .tags .child td {
    background: #e0e0e0;
  }

  .tags .rowhead,
  .tags .child .rowhead {
    background: #cbcbcb;
  }

  .tags .active .rowhead {
    background: #c5cfda;
  }

  .dark .ico {
    margin-left: 2px;
  }

  .cell {
    display: flex;
    align-items: center;
    justify-content: space-between;
    height: 22px;
    padding-left: 5px;
  }

  .note {
    font-family: "Noto Sans", "Noto Sans CJK TC", sans-serif;
  }

  .name {
    justify-content: flex-start;
    padding: 0;
  }

  .mark {
    display: flex;
    align-items: center;
    align-self: stretch;
    width: 22px;
    padding-left: 6px;
    margin-right: 6px;
  }

  .child .mark {
    background: #ebebeb;
    margin-right: 30px;
  }

  .square {
    width: 7px;
    height: 8px;
    background: #2f5fd8;
    border: 1px solid #1d3f9c;
  }

  .child .plc {
    color: #888;
  }

  .cycle {
    padding-left: 6px;
  }

  .end {
    justify-content: flex-end;
  }

  .mini-btn {
    display: flex;
    align-items: center;
    justify-content: center;
    width: 22px;
    height: 22px;
    background: linear-gradient(#f2f2f2, #d6d6d6 50%, #c0c0c0);
    border: 1px solid #777;
  }

  .dots {
    align-items: flex-end;
  }

  .picker {
    position: relative;
    display: flex;
    height: 23px;
    background: #fff;
    border: 1px solid #2f62c8;
  }

  .picker select,
  .combo select {
    flex: 1;
    appearance: none;
    padding-left: 4px;
  }

  .picker .mini-btn,
  .combo span {
    pointer-events: none;
  }

  .picker .mini-btn {
    height: 21px;
  }

  .picker::after {
    content: "";
    position: absolute;
    right: -2px;
    bottom: -2px;
    width: 5px;
    height: 5px;
    background: #2f62c8;
  }

  .hbar {
    display: flex;
    flex: none;
    height: 25px;
    padding: 3px 91px 1px 31px;
    background: linear-gradient(90deg, #cbcbcb 30px, #c2c2c2 30px);
    border-bottom: 1px solid #888;
  }

  .hbar .arrow-btn {
    height: 21px;
  }

  .hthumb {
    display: flex;
    align-items: center;
    justify-content: center;
    flex: 1;
    gap: 2px;
    margin-left: 91px;
    background: linear-gradient(#ededed, #d2d2d2);
    border: 1px solid #8a8a8a;
    box-shadow: inset 0 0 0 1px #fff;
  }

  .hthumb i {
    width: 1px;
    height: 10px;
    background: #555;
  }

  .splitter {
    display: flex;
    justify-content: center;
    flex: none;
    gap: 12px;
    height: 9px;
    padding: 1px 0;
    padding-left: 23px;
    background: #d8d8d8;
    border-bottom: 1px solid #888;
  }

  .splitter button {
    display: flex;
    align-items: center;
    justify-content: center;
    width: 30px;
    background: #b4b4b4;
    border: solid #888;
    border-width: 0 1px;
  }

  .splitter .light {
    background: #dedede;
  }

  .params {
    flex: none;
    height: 27px;
    padding-left: 21px;
    background: #b0b0b0;
    border-bottom: 4px solid #1b2236;
    color: #fff;
    font-size: 16px;
    font-weight: 600;
    line-height: 24px;
    text-align: center;
  }

  .inspector {
    display: flex;
    align-items: flex-end;
    justify-content: flex-end;
    flex: none;
    gap: 3px;
    height: 34px;
    padding-right: 7px;
    background: #b0b0b0;
    border-bottom: 3px solid #ededed;
    font-size: 18px;
  }

  .inspector .win {
    align-self: center;
    margin-left: 19px;
  }

  .itab {
    display: flex;
    align-items: center;
    gap: 4px;
    width: 94px;
    height: 27px;
    padding-left: 4px;
    background: linear-gradient(#d8d8d8, #c6c6c6);
    border: solid #7c7c7c;
    border-width: 2px 2px 0 1px;
    color: #444;
  }

  .itab.on {
    width: 100px;
    background: #ededed;
    border-color: #ededed;
    color: #111;
    font-weight: bold;
  }

  .badge {
    display: inline-block;
    margin-left: auto;
  }

  .badge .ico {
    width: 16px;
    height: 16px;
  }

  .itab .badge {
    margin-right: 4px;
  }

  .subtabs {
    display: flex;
    align-items: flex-end;
    flex: none;
    gap: 2px;
    height: 31px;
    padding-left: 8px;
    background: #cbcbcb;
    box-shadow: inset 0 -1px #888;
    font-size: 18px;
  }

  .subtabs button {
    display: flex;
    align-items: center;
    height: 27px;
    padding: 0 4px 0 13px;
    background: linear-gradient(#dadada, #c8c8c8);
    border: 1px solid #777;
    border-right-width: 2px;
    color: #444;
  }

  .subtabs .general {
    width: 88px;
  }

  .subtabs .cross {
    width: 118px;
  }

  .subtabs .on {
    width: 78px;
    background: #e9e9e9;
    border-bottom: none;
    color: #111;
    font-weight: bold;
  }

  .filters {
    display: flex;
    align-items: center;
    flex: none;
    gap: 3px;
    height: 59px;
    padding: 0 5px 26px;
    background: linear-gradient(#e9e9e9 33px, #f0f0f0 33px);
  }

  .combo {
    display: flex;
    width: 250px;
    height: 23px;
    margin-left: 3px;
    background: #fff;
    border: 1px solid #999;
    font-size: 16px;
  }

  .combo span {
    display: flex;
    align-items: center;
    justify-content: center;
    width: 20px;
    background: linear-gradient(#eee, #c4c4c4);
    border-left: 1px solid #888;
  }

  .m-icon {
    width: 36px;
  }
  .m-path {
    width: 248px;
  }
  .m-text {
    width: 438px;
  }
  .m-go {
    width: 64px;
  }
  .m-help {
    width: 62px;
  }
  .m-err {
    width: 68px;
  }
  .m-warn {
    width: 88px;
  }
  .m-time {
    width: 100px;
  }

  .msgs .bang {
    padding-left: 8px;
  }

  .kind .ico {
    margin-left: 8px;
  }

  .shade td:not(.rest) {
    background: #e0e0e0;
  }

  .picked td:not(.rest) {
    background: #d0d6da;
  }

  .picked .go:not(.rest) {
    background: #d8dde1;
  }

  .picked .kind {
    outline: 1px dotted #777;
    outline-offset: -1px;
  }

  .go .ico {
    width: 18px;
    height: 18px;
    margin-left: 21px;
  }

  .path {
    display: flex;
    align-items: center;
    gap: 12px;
    padding-left: 7px;
  }

  .p2 {
    padding-left: 29px;
  }

  /* overlays */
  .marker {
    position: absolute;
    top: 0;
    left: 0;
    mix-blend-mode: multiply;
    pointer-events: none;
  }

  .watermark {
    position: absolute;
    top: 524px;
    left: 721px;
    transform: rotate(-30deg);
    transform-origin: 0 100%;
    color: rgba(255, 255, 255, 0.45);
    text-shadow: 0 0 1px rgba(90, 90, 90, 0.25);
    pointer-events: none;
  }

  .wm-title {
    display: flex;
    gap: 8px;
    padding-left: 28px;
    font-size: 34px;
    font-weight: bold;
    line-height: 32px;
  }

  .wm-gap {
    margin-left: 30px;
  }

  .wm-url {
    padding-left: 14px;
    font-family: "Liberation Sans", Arial, sans-serif;
    font-size: 27px;
    line-height: 34px;
  }

  .ime {
    position: absolute;
    bottom: 7px;
    left: 1112px;
    display: flex;
    align-items: center;
    gap: 10px;
    width: 220px;
    height: 33px;
    padding-left: 13px;
    background: #fff;
    border: 1px solid #c3d4ea;
    border-radius: 2px;
  }

  .sogou {
    position: absolute;
    left: -35px;
    bottom: -2px;
  }

  .zh {
    width: 20px;
    color: #0a73d9;
    font-size: 20px;
    font-weight: bold;
  }

  .ime .ico {
    width: 18px;
    height: 18px;
    margin-right: 2px;
  }
</style>
